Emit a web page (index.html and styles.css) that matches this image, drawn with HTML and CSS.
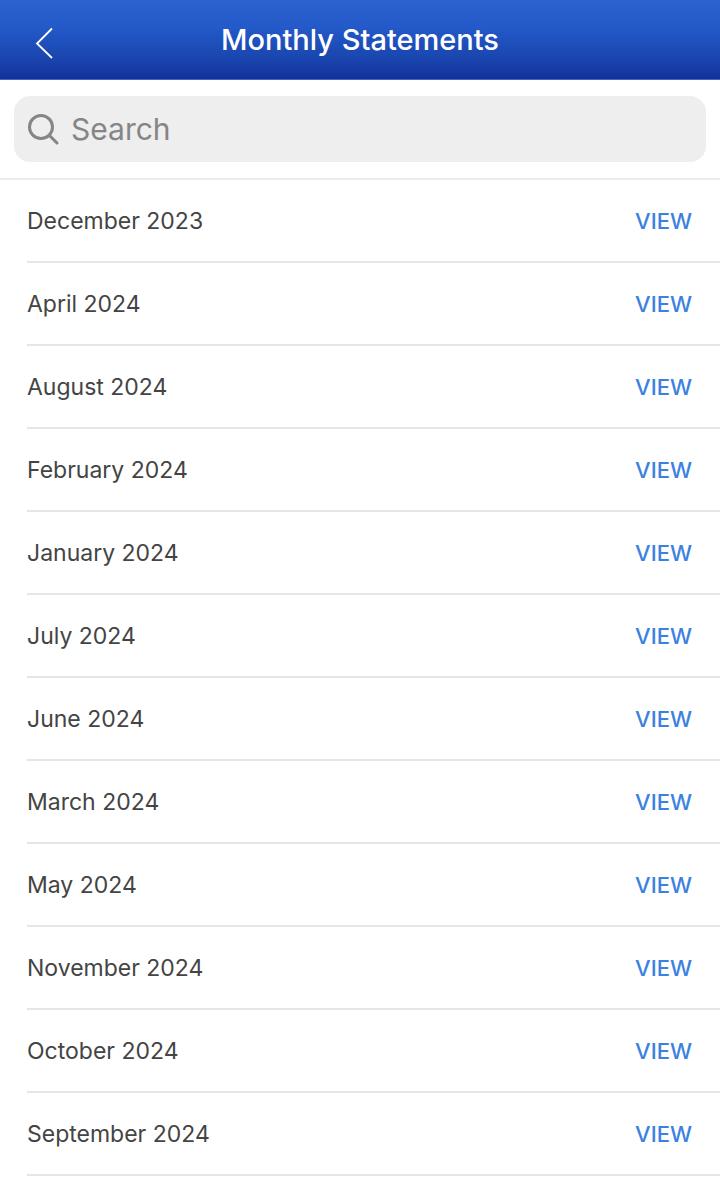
FILE: index.html
```html
<!DOCTYPE html>
<html lang="en">
<head>
  <meta charset="UTF-8">
  <meta name="viewport" content="width=device-width, initial-scale=1.0">
  <title>Monthly Statements</title>
  <link rel="stylesheet" href="styles.css">
</head>
<body>

  <header class="top-bar">
    <button class="back-button" aria-label="Back">
      <svg width="20" height="32" viewBox="0 0 20 32" fill="none" stroke="#fff" stroke-width="1.8">
        <path d="M18 1.5 L3 16.5 L18 31" />
      </svg>
    </button>
    <h1>Monthly Statements</h1>
  </header>

  <div class="search-wrap">
    <div class="search-box">
      <svg width="32" height="32" viewBox="0 0 32 32" fill="none" stroke="#858585" stroke-width="3">
        <circle cx="14" cy="14" r="11.5" />
        <path d="M22.5 22.5 L30 30" stroke-linecap="round" />
      </svg>
      <span class="search-label">Search</span>
    </div>
  </div>

  <ul class="statement-list">
    <li><span class="month">December 2023</span><a class="view-link" href="#">VIEW</a></li>
    <li><span class="month">April 2024</span><a class="view-link" href="#">VIEW</a></li>
    <li><span class="month">August 2024</span><a class="view-link" href="#">VIEW</a></li>
    <li><span class="month">February 2024</span><a class="view-link" href="#">VIEW</a></li>
    <li><span class="month">January 2024</span><a class="view-link" href="#">VIEW</a></li>
    <li><span class="month">July 2024</span><a class="view-link" href="#">VIEW</a></li>
    <li><span class="month">June 2024</span><a class="view-link" href="#">VIEW</a></li>
    <li><span class="month">March 2024</span><a class="view-link" href="#">VIEW</a></li>
    <li><span class="month">May 2024</span><a class="view-link" href="#">VIEW</a></li>
    <li><span class="month">November 2024</span><a class="view-link" href="#">VIEW</a></li>
    <li><span class="month">October 2024</span><a class="view-link" href="#">VIEW</a></li>
    <li><span class="month">September 2024</span><a class="view-link" href="#">VIEW</a></li>
  </ul>

</body>
</html>
```

FILE: styles.css
```css
html, body {
  margin: 0;
  padding: 0;
  background-color: #fff;
  font-family: Inter, "Liberation Sans", sans-serif;
  overflow: hidden;
}

.top-bar {
  height: 79px;
  display: flex;
  align-items: center;
  justify-content: center;
  position: relative;
  background: linear-gradient(to bottom, #2a62cf 0%, #2359c8 35%, #1a45ae 75%, #12309c 100%);
  border-bottom: 1px solid #3a68c4;
}

.back-button {
  position: absolute;
  left: 34px;
  top: 27px;
  padding: 0;
  border: 0;
  background: none;
  display: flex;
}

.top-bar h1 {
  margin: 0;
  color: #fff;
  font-size: 29px;
  font-weight: 500;
}

.search-wrap {
  padding: 16px 14px;
  border-bottom: 2px solid #ebebeb;
}

.search-box {
  height: 66px;
  padding-left: 13px;
  display: flex;
  align-items: center;
  gap: 12px;
  background-color: #eeeeee;
  border-radius: 16px;
}

.search-label {
  color: #858585;
  font-size: 30px;
}

.statement-list {
  list-style: none;
  margin: 0;
  padding: 0 0 0 27px;
}

.statement-list li {
  height: 81px;
  padding-right: 28px;
  display: flex;
  align-items: center;
  justify-content: space-between;
  border-bottom: 2px solid #e6e6e6;
}

.month {
  color: #444;
  font-size: 23px;
}

.view-link {
  color: #3b82e0;
  font-size: 22px;
  font-weight: 500;
  text-decoration: none;
}
```
